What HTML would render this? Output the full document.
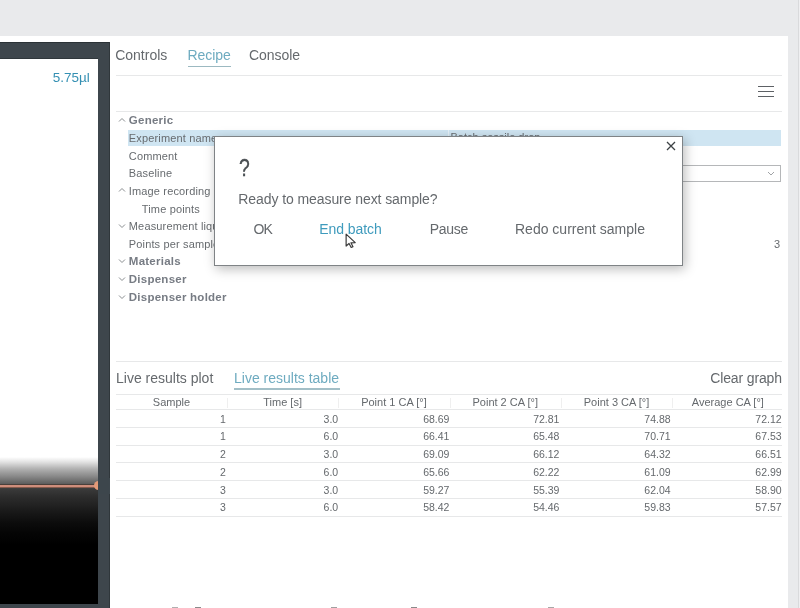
<!DOCTYPE html>
<html><head><meta charset="utf-8"><style>
html,body{margin:0;padding:0;width:800px;height:608px;overflow:hidden;background:#fff;font-family:"Liberation Sans", sans-serif;}
#wrap{position:absolute;left:0;top:0;width:800px;height:608px;overflow:hidden;filter:blur(0.35px);}
</style></head><body><div id="wrap">
<div style="position:absolute;left:0px;top:0px;width:800px;height:36px;background:#e9eaec"></div>
<div style="position:absolute;left:788px;top:0px;width:12px;height:608px;background:#e9eaec"></div>
<div style="position:absolute;left:798px;top:0px;width:1px;height:608px;background:#d9dadc"></div>
<div style="position:absolute;left:799px;top:0px;width:1px;height:608px;background:#efeff1"></div>
<div style="position:absolute;left:0px;top:36px;width:788px;height:572px;background:#fff;border-top-right-radius:3px"></div>
<div style="position:absolute;left:0px;top:42px;width:110px;height:566px;background:#3e464c"></div>
<div style="position:absolute;left:0px;top:42px;width:110px;height:1px;background:#2b3236"></div>
<div style="position:absolute;left:0px;top:58px;width:98px;height:1px;background:#30373b"></div>
<div style="position:absolute;left:109px;top:42px;width:1px;height:566px;background:#30373b"></div>
<div style="position:absolute;left:0px;top:59px;width:98px;height:545px;background:linear-gradient(to bottom,#fff 0px,#fff 398px,#e2e2e2 403px,#b0b0b0 410px,#858585 418px,#626262 424px,#3a3a3a 430px,#2c2c2c 438px,#222 446px,#171717 454px,#0c0c0c 464px,#050505 474px,#000 486px)"></div>
<div style="position:absolute;left:0px;top:485px;width:96px;height:2.5px;background:#cf8e7c"></div>
<div style="position:absolute;left:0px;top:484px;width:96px;height:1px;background:rgba(60,40,30,0.5)"></div>
<div style="position:absolute;left:0px;top:487px;width:96px;height:1px;background:rgba(60,40,30,0.5)"></div>
<div style="position:absolute;left:93.5px;top:481px;width:9px;height:9px;background:#e39a78;border-radius:50%"></div>
<div style="position:absolute;left:98px;top:478px;width:12px;height:16px;background:#3d464c"></div>
<div style="position:absolute;right:710.2px;top:70.67px;font-size:13.5px;line-height:13.5px;color:#3590b3;font-weight:400;letter-spacing:0px;white-space:nowrap;">5.75µl</div>
<div style="position:absolute;left:115.2px;top:48.15px;font-size:14px;line-height:14px;color:#65696d;font-weight:400;letter-spacing:0px;white-space:nowrap;">Controls</div>
<div style="position:absolute;left:187.5px;top:48.15px;font-size:14px;line-height:14px;color:#6eabc0;font-weight:400;letter-spacing:-0.05px;white-space:nowrap;">Recipe</div>
<div style="position:absolute;left:188.2px;top:65.8px;width:42.5px;height:1.3px;background:#9cb9c1"></div>
<div style="position:absolute;left:249px;top:48.15px;font-size:14px;line-height:14px;color:#65696d;font-weight:400;letter-spacing:-0.05px;white-space:nowrap;">Console</div>
<div style="position:absolute;left:116px;top:75px;width:666px;height:1px;background:#e7e8e9"></div>
<div style="position:absolute;left:758px;top:86px;width:16px;height:1.2px;background:#5d6165"></div>
<div style="position:absolute;left:758px;top:91px;width:16px;height:1.2px;background:#5d6165"></div>
<div style="position:absolute;left:758px;top:96px;width:16px;height:1.2px;background:#5d6165"></div>
<div style="position:absolute;left:116px;top:111px;width:666px;height:1px;background:#e7e8e9"></div>
<div style="position:absolute;left:128px;top:130px;width:653px;height:16px;background:#cfe5f2"></div>
<svg style="position:absolute;left:118px;top:116.5px" width="8" height="6" viewBox="0 0 8 6"><path d="M1 4.5 L4 1.5 L7 4.5" fill="none" stroke="#8a8e91" stroke-width="1"/></svg>
<div style="position:absolute;left:128.8px;top:114.77px;font-size:11.5px;line-height:11.5px;color:#777c84;font-weight:700;letter-spacing:0.25px;white-space:nowrap;">Generic</div>
<div style="position:absolute;left:128.8px;top:132.89px;font-size:11px;line-height:11px;color:#676b6f;font-weight:400;letter-spacing:0.15px;white-space:nowrap;">Experiment name</div>
<div style="position:absolute;left:128.8px;top:150.59px;font-size:11px;line-height:11px;color:#676b6f;font-weight:400;letter-spacing:0.15px;white-space:nowrap;">Comment</div>
<div style="position:absolute;left:128.8px;top:168.29px;font-size:11px;line-height:11px;color:#676b6f;font-weight:400;letter-spacing:0.15px;white-space:nowrap;">Baseline</div>
<svg style="position:absolute;left:118px;top:187.3px" width="8" height="6" viewBox="0 0 8 6"><path d="M1 4.5 L4 1.5 L7 4.5" fill="none" stroke="#8a8e91" stroke-width="1"/></svg>
<div style="position:absolute;left:128.8px;top:185.99px;font-size:11px;line-height:11px;color:#676b6f;font-weight:400;letter-spacing:0.15px;white-space:nowrap;">Image recording settings</div>
<div style="position:absolute;left:141.8px;top:203.69px;font-size:11px;line-height:11px;color:#676b6f;font-weight:400;letter-spacing:0.15px;white-space:nowrap;">Time points</div>
<svg style="position:absolute;left:118px;top:222.7px" width="8" height="6" viewBox="0 0 8 6"><path d="M1 1.5 L4 4.5 L7 1.5" fill="none" stroke="#8a8e91" stroke-width="1"/></svg>
<div style="position:absolute;left:128.8px;top:221.39px;font-size:11px;line-height:11px;color:#676b6f;font-weight:400;letter-spacing:0.15px;white-space:nowrap;">Measurement liquid</div>
<div style="position:absolute;left:128.8px;top:239.09px;font-size:11px;line-height:11px;color:#676b6f;font-weight:400;letter-spacing:0.15px;white-space:nowrap;">Points per sample</div>
<svg style="position:absolute;left:118px;top:258.1px" width="8" height="6" viewBox="0 0 8 6"><path d="M1 1.5 L4 4.5 L7 1.5" fill="none" stroke="#8a8e91" stroke-width="1"/></svg>
<div style="position:absolute;left:128.8px;top:256.37px;font-size:11.5px;line-height:11.5px;color:#777c84;font-weight:700;letter-spacing:0.25px;white-space:nowrap;">Materials</div>
<svg style="position:absolute;left:118px;top:275.8px" width="8" height="6" viewBox="0 0 8 6"><path d="M1 1.5 L4 4.5 L7 1.5" fill="none" stroke="#8a8e91" stroke-width="1"/></svg>
<div style="position:absolute;left:128.8px;top:274.07px;font-size:11.5px;line-height:11.5px;color:#777c84;font-weight:700;letter-spacing:0.25px;white-space:nowrap;">Dispenser</div>
<svg style="position:absolute;left:118px;top:293.5px" width="8" height="6" viewBox="0 0 8 6"><path d="M1 1.5 L4 4.5 L7 1.5" fill="none" stroke="#8a8e91" stroke-width="1"/></svg>
<div style="position:absolute;left:128.8px;top:291.77px;font-size:11.5px;line-height:11.5px;color:#777c84;font-weight:700;letter-spacing:0.25px;white-space:nowrap;">Dispenser holder</div>
<div style="position:absolute;left:450.5px;top:131.89px;font-size:11px;line-height:11px;color:#676b6f;font-weight:400;letter-spacing:0px;white-space:nowrap;">Batch sessile drop</div>
<div style="position:absolute;left:448px;top:130px;width:1px;height:16px;background:#e6f1f8"></div>
<div style="position:absolute;left:600px;top:165px;width:181px;height:17px;border:1px solid #b5b7b9;box-sizing:border-box;background:#fff"></div>
<svg style="position:absolute;left:767px;top:171px" width="8" height="5" viewBox="0 0 8 5"><path d="M1 1 L4 4 L7 1" fill="none" stroke="#a0a3a6" stroke-width="1"/></svg>
<div style="position:absolute;right:20px;top:238.69px;font-size:11px;line-height:11px;color:#676b6f;font-weight:400;letter-spacing:0px;white-space:nowrap;">3</div>
<div style="position:absolute;left:214px;top:136px;width:469px;height:130px;background:#fff;border:1px solid #7f8386;box-sizing:border-box;box-shadow:2px 3px 11px rgba(0,0,0,0.27)"></div>
<div style="position:absolute;left:239.2px;top:156.93px;font-size:23px;line-height:23px;color:#4a4f53;font-weight:400;letter-spacing:0px;white-space:nowrap;transform:scaleX(0.84);transform-origin:0 0;-webkit-text-stroke:0.35px #4a4f53;">?</div>
<div style="position:absolute;left:238.3px;top:191.65px;font-size:14px;line-height:14px;color:#65696d;font-weight:400;letter-spacing:-0.08px;white-space:nowrap;">Ready to measure next sample?</div>
<div style="position:absolute;left:253.5px;top:221.65px;font-size:14px;line-height:14px;color:#65696d;font-weight:400;letter-spacing:-1px;white-space:nowrap;">OK</div>
<div style="position:absolute;left:319.2px;top:221.65px;font-size:14px;line-height:14px;color:#3f9bbd;font-weight:400;letter-spacing:-0.05px;white-space:nowrap;">End batch</div>
<div style="position:absolute;left:429.8px;top:221.65px;font-size:14px;line-height:14px;color:#65696d;font-weight:400;letter-spacing:-0.3px;white-space:nowrap;">Pause</div>
<div style="position:absolute;left:515px;top:221.65px;font-size:14px;line-height:14px;color:#65696d;font-weight:400;letter-spacing:0px;white-space:nowrap;">Redo current sample</div>
<svg style="position:absolute;left:666px;top:141px" width="10" height="10" viewBox="0 0 10 10"><path d="M1 1 L9 9 M9 1 L1 9" stroke="#3d4245" stroke-width="1.3"/></svg>
<svg style="position:absolute;left:344.5px;top:233.3px" width="13.5" height="18" viewBox="0 0 12 16"><path d="M1 1 L1 11.6 L3.6 9.3 L5.5 12.9 L7.1 12.2 L5.3 8.7 L9.1 8.5 Z" fill="#fff" stroke="#3a3a3a" stroke-width="1.05" stroke-linejoin="round"/></svg>
<div style="position:absolute;left:172px;top:607px;width:6px;height:1px;background:#b0b0b0"></div>
<div style="position:absolute;left:195px;top:606.5px;width:6px;height:1.5px;background:#8a8a8a"></div>
<div style="position:absolute;left:331px;top:607px;width:6px;height:1px;background:#a0a0a0"></div>
<div style="position:absolute;left:411px;top:607px;width:6px;height:1px;background:#8a8a8a"></div>
<div style="position:absolute;left:548px;top:607px;width:6px;height:1px;background:#a8a8a8"></div>
<div style="position:absolute;left:116px;top:361px;width:666px;height:1px;background:#e7e8e9"></div>
<div style="position:absolute;left:116px;top:371.15px;font-size:14px;line-height:14px;color:#65696d;font-weight:400;letter-spacing:0px;white-space:nowrap;">Live results plot</div>
<div style="position:absolute;left:234px;top:371.15px;font-size:14px;line-height:14px;color:#6eabc0;font-weight:400;letter-spacing:0px;white-space:nowrap;">Live results table</div>
<div style="position:absolute;left:234px;top:388.4px;width:106px;height:1.4px;background:#a3bfc7"></div>
<div style="position:absolute;right:18.200000000000045px;top:371.15px;font-size:14px;line-height:14px;color:#65696d;font-weight:400;letter-spacing:-0.15px;white-space:nowrap;">Clear graph</div>
<div style="position:absolute;left:116px;top:394px;width:666px;height:1px;background:#e7e8e9"></div>
<div style="position:absolute;left:171.5px;transform:translateX(-50%);top:397.19px;font-size:11px;line-height:11px;color:#65696d;font-weight:400;letter-spacing:0px;white-space:nowrap;">Sample</div>
<div style="position:absolute;left:282.65px;transform:translateX(-50%);top:397.19px;font-size:11px;line-height:11px;color:#65696d;font-weight:400;letter-spacing:0px;white-space:nowrap;">Time [s]</div>
<div style="position:absolute;left:227px;top:398px;width:1px;height:10px;background:#efefef"></div>
<div style="position:absolute;left:393.95000000000005px;transform:translateX(-50%);top:397.19px;font-size:11px;line-height:11px;color:#65696d;font-weight:400;letter-spacing:0px;white-space:nowrap;">Point 1 CA [°]</div>
<div style="position:absolute;left:338.3px;top:398px;width:1px;height:10px;background:#efefef"></div>
<div style="position:absolute;left:505.25px;transform:translateX(-50%);top:397.19px;font-size:11px;line-height:11px;color:#65696d;font-weight:400;letter-spacing:0px;white-space:nowrap;">Point 2 CA [°]</div>
<div style="position:absolute;left:449.6px;top:398px;width:1px;height:10px;background:#efefef"></div>
<div style="position:absolute;left:616.55px;transform:translateX(-50%);top:397.19px;font-size:11px;line-height:11px;color:#65696d;font-weight:400;letter-spacing:0px;white-space:nowrap;">Point 3 CA [°]</div>
<div style="position:absolute;left:560.9px;top:398px;width:1px;height:10px;background:#efefef"></div>
<div style="position:absolute;left:727.85px;transform:translateX(-50%);top:397.19px;font-size:11px;line-height:11px;color:#65696d;font-weight:400;letter-spacing:0px;white-space:nowrap;">Average CA [°]</div>
<div style="position:absolute;left:672.2px;top:398px;width:1px;height:10px;background:#efefef"></div>
<div style="position:absolute;left:116px;top:409px;width:666px;height:1px;background:#e7e8e9"></div>
<div style="position:absolute;left:116px;top:427px;width:666px;height:1px;background:#e7e8e9"></div>
<div style="position:absolute;left:116px;top:445px;width:666px;height:1px;background:#e7e8e9"></div>
<div style="position:absolute;left:116px;top:462px;width:666px;height:1px;background:#e7e8e9"></div>
<div style="position:absolute;left:116px;top:480px;width:666px;height:1px;background:#e7e8e9"></div>
<div style="position:absolute;left:116px;top:498px;width:666px;height:1px;background:#e7e8e9"></div>
<div style="position:absolute;left:116px;top:516px;width:666px;height:1px;background:#e7e8e9"></div>
<div style="position:absolute;right:574.2px;top:413.61px;font-size:10.5px;line-height:10.5px;color:#65696d;font-weight:400;letter-spacing:0px;white-space:nowrap;">1</div>
<div style="position:absolute;right:461.8px;top:413.61px;font-size:10.5px;line-height:10.5px;color:#65696d;font-weight:400;letter-spacing:0px;white-space:nowrap;">3.0</div>
<div style="position:absolute;right:350.6px;top:413.61px;font-size:10.5px;line-height:10.5px;color:#65696d;font-weight:400;letter-spacing:0px;white-space:nowrap;">68.69</div>
<div style="position:absolute;right:240.60000000000002px;top:413.61px;font-size:10.5px;line-height:10.5px;color:#65696d;font-weight:400;letter-spacing:0px;white-space:nowrap;">72.81</div>
<div style="position:absolute;right:129.39999999999998px;top:413.61px;font-size:10.5px;line-height:10.5px;color:#65696d;font-weight:400;letter-spacing:0px;white-space:nowrap;">74.88</div>
<div style="position:absolute;right:18.399999999999977px;top:413.61px;font-size:10.5px;line-height:10.5px;color:#65696d;font-weight:400;letter-spacing:0px;white-space:nowrap;">72.12</div>
<div style="position:absolute;right:574.2px;top:431.36px;font-size:10.5px;line-height:10.5px;color:#65696d;font-weight:400;letter-spacing:0px;white-space:nowrap;">1</div>
<div style="position:absolute;right:461.8px;top:431.36px;font-size:10.5px;line-height:10.5px;color:#65696d;font-weight:400;letter-spacing:0px;white-space:nowrap;">6.0</div>
<div style="position:absolute;right:350.6px;top:431.36px;font-size:10.5px;line-height:10.5px;color:#65696d;font-weight:400;letter-spacing:0px;white-space:nowrap;">66.41</div>
<div style="position:absolute;right:240.60000000000002px;top:431.36px;font-size:10.5px;line-height:10.5px;color:#65696d;font-weight:400;letter-spacing:0px;white-space:nowrap;">65.48</div>
<div style="position:absolute;right:129.39999999999998px;top:431.36px;font-size:10.5px;line-height:10.5px;color:#65696d;font-weight:400;letter-spacing:0px;white-space:nowrap;">70.71</div>
<div style="position:absolute;right:18.399999999999977px;top:431.36px;font-size:10.5px;line-height:10.5px;color:#65696d;font-weight:400;letter-spacing:0px;white-space:nowrap;">67.53</div>
<div style="position:absolute;right:574.2px;top:449.11px;font-size:10.5px;line-height:10.5px;color:#65696d;font-weight:400;letter-spacing:0px;white-space:nowrap;">2</div>
<div style="position:absolute;right:461.8px;top:449.11px;font-size:10.5px;line-height:10.5px;color:#65696d;font-weight:400;letter-spacing:0px;white-space:nowrap;">3.0</div>
<div style="position:absolute;right:350.6px;top:449.11px;font-size:10.5px;line-height:10.5px;color:#65696d;font-weight:400;letter-spacing:0px;white-space:nowrap;">69.09</div>
<div style="position:absolute;right:240.60000000000002px;top:449.11px;font-size:10.5px;line-height:10.5px;color:#65696d;font-weight:400;letter-spacing:0px;white-space:nowrap;">66.12</div>
<div style="position:absolute;right:129.39999999999998px;top:449.11px;font-size:10.5px;line-height:10.5px;color:#65696d;font-weight:400;letter-spacing:0px;white-space:nowrap;">64.32</div>
<div style="position:absolute;right:18.399999999999977px;top:449.11px;font-size:10.5px;line-height:10.5px;color:#65696d;font-weight:400;letter-spacing:0px;white-space:nowrap;">66.51</div>
<div style="position:absolute;right:574.2px;top:466.86px;font-size:10.5px;line-height:10.5px;color:#65696d;font-weight:400;letter-spacing:0px;white-space:nowrap;">2</div>
<div style="position:absolute;right:461.8px;top:466.86px;font-size:10.5px;line-height:10.5px;color:#65696d;font-weight:400;letter-spacing:0px;white-space:nowrap;">6.0</div>
<div style="position:absolute;right:350.6px;top:466.86px;font-size:10.5px;line-height:10.5px;color:#65696d;font-weight:400;letter-spacing:0px;white-space:nowrap;">65.66</div>
<div style="position:absolute;right:240.60000000000002px;top:466.86px;font-size:10.5px;line-height:10.5px;color:#65696d;font-weight:400;letter-spacing:0px;white-space:nowrap;">62.22</div>
<div style="position:absolute;right:129.39999999999998px;top:466.86px;font-size:10.5px;line-height:10.5px;color:#65696d;font-weight:400;letter-spacing:0px;white-space:nowrap;">61.09</div>
<div style="position:absolute;right:18.399999999999977px;top:466.86px;font-size:10.5px;line-height:10.5px;color:#65696d;font-weight:400;letter-spacing:0px;white-space:nowrap;">62.99</div>
<div style="position:absolute;right:574.2px;top:484.61px;font-size:10.5px;line-height:10.5px;color:#65696d;font-weight:400;letter-spacing:0px;white-space:nowrap;">3</div>
<div style="position:absolute;right:461.8px;top:484.61px;font-size:10.5px;line-height:10.5px;color:#65696d;font-weight:400;letter-spacing:0px;white-space:nowrap;">3.0</div>
<div style="position:absolute;right:350.6px;top:484.61px;font-size:10.5px;line-height:10.5px;color:#65696d;font-weight:400;letter-spacing:0px;white-space:nowrap;">59.27</div>
<div style="position:absolute;right:240.60000000000002px;top:484.61px;font-size:10.5px;line-height:10.5px;color:#65696d;font-weight:400;letter-spacing:0px;white-space:nowrap;">55.39</div>
<div style="position:absolute;right:129.39999999999998px;top:484.61px;font-size:10.5px;line-height:10.5px;color:#65696d;font-weight:400;letter-spacing:0px;white-space:nowrap;">62.04</div>
<div style="position:absolute;right:18.399999999999977px;top:484.61px;font-size:10.5px;line-height:10.5px;color:#65696d;font-weight:400;letter-spacing:0px;white-space:nowrap;">58.90</div>
<div style="position:absolute;right:574.2px;top:502.36px;font-size:10.5px;line-height:10.5px;color:#65696d;font-weight:400;letter-spacing:0px;white-space:nowrap;">3</div>
<div style="position:absolute;right:461.8px;top:502.36px;font-size:10.5px;line-height:10.5px;color:#65696d;font-weight:400;letter-spacing:0px;white-space:nowrap;">6.0</div>
<div style="position:absolute;right:350.6px;top:502.36px;font-size:10.5px;line-height:10.5px;color:#65696d;font-weight:400;letter-spacing:0px;white-space:nowrap;">58.42</div>
<div style="position:absolute;right:240.60000000000002px;top:502.36px;font-size:10.5px;line-height:10.5px;color:#65696d;font-weight:400;letter-spacing:0px;white-space:nowrap;">54.46</div>
<div style="position:absolute;right:129.39999999999998px;top:502.36px;font-size:10.5px;line-height:10.5px;color:#65696d;font-weight:400;letter-spacing:0px;white-space:nowrap;">59.83</div>
<div style="position:absolute;right:18.399999999999977px;top:502.36px;font-size:10.5px;line-height:10.5px;color:#65696d;font-weight:400;letter-spacing:0px;white-space:nowrap;">57.57</div>
</div></body></html>
